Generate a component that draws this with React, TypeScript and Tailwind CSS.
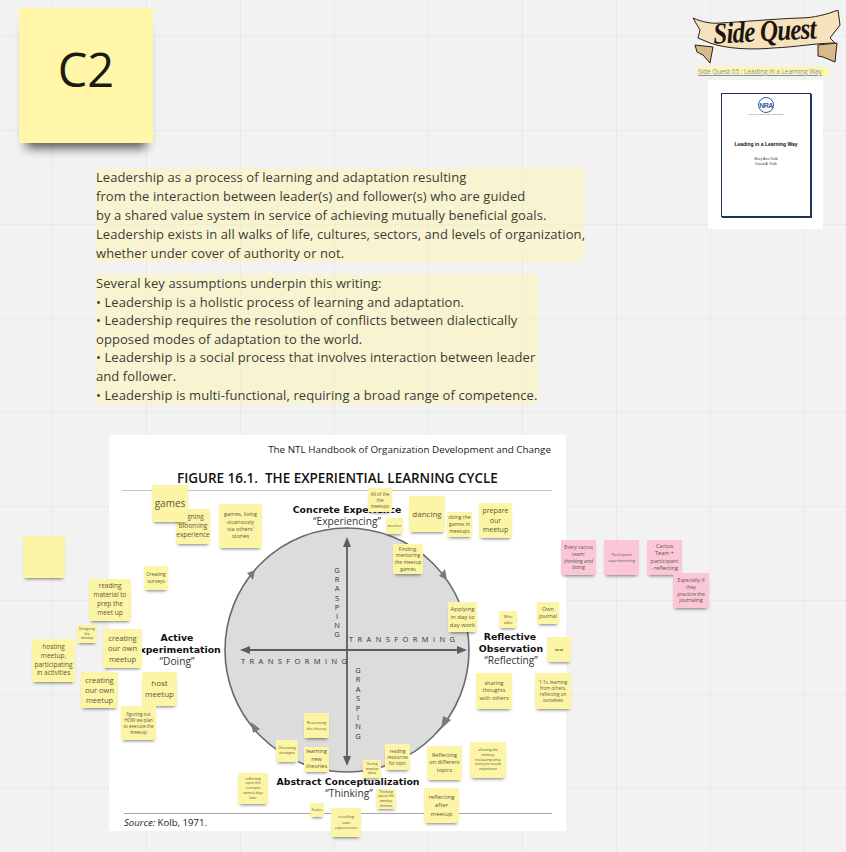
const yellowNotes = [
  { pos: "left-[176px] top-[509px] w-[34px] h-[35px]", size: "text-[6.5px]", text: "signing\nblooming\nexperience" },
  { pos: "left-[152px] top-[485px] w-[36px] h-[37px]", size: "text-[10px]", text: "games" },
  { pos: "left-[219px] top-[504px] w-[43px] h-[44px]", size: "text-[5.5px]", text: "games, living\nvicariously\nvia others'\nstories" },
  { pos: "left-[144px] top-[566px] w-[24px] h-[24px]", size: "text-[5px]", text: "Creating\nsurveys" },
  { pos: "left-[89px] top-[579px] w-[42px] h-[42px]", size: "text-[6.5px]", text: "reading\nmaterial to\nprep the\nmeet up" },
  { pos: "left-[77px] top-[625px] w-[20px] h-[18px]", size: "text-[3.5px]", text: "Designing\nthe\nmeetup" },
  { pos: "left-[103px] top-[629px] w-[39px] h-[39px]", size: "text-[7.5px]", text: "creating\nour own\nmeetup" },
  { pos: "left-[32px] top-[639px] w-[43px] h-[43px]", size: "text-[6.5px]", text: "hosting\nmeetup,\nparticipating\nin activities" },
  { pos: "left-[81px] top-[672px] w-[37px] h-[36px]", size: "text-[7.5px]", text: "creating\nour own\nmeetup" },
  { pos: "left-[142px] top-[672px] w-[35px] h-[34px]", size: "text-[8px]", text: "host\nmeetup" },
  { pos: "left-[121px] top-[706px] w-[35px] h-[34px]", size: "text-[4.5px]", text: "figuring out\nHOW we plan\nto execute the\nmeetup" },
  { pos: "left-[23px] top-[536px] w-[42px] h-[42px]", size: "text-[5px]", text: "" },
  { pos: "left-[368px] top-[488px] w-[24px] h-[24px]", size: "text-[4.5px]", text: "All of the\nthe\nmeetups" },
  { pos: "left-[386px] top-[518px] w-[17px] h-[16px]", size: "text-[4px]", text: "mentor\n" },
  { pos: "left-[409px] top-[496px] w-[36px] h-[36px]", size: "text-[8px]", text: "dancing" },
  { pos: "left-[447px] top-[512px] w-[25px] h-[25px]", size: "text-[5px]", text: "doing the\ngames in\nmeetups" },
  { pos: "left-[479px] top-[503px] w-[33px] h-[35px]", size: "text-[7px]", text: "prepare\nour\nmeetup" },
  { pos: "left-[393px] top-[544px] w-[30px] h-[30px]", size: "text-[5px]", text: "Finding,\nmentoring\nthe meetup\ngames" },
  { pos: "left-[448px] top-[602px] w-[29px] h-[30px]", size: "text-[6px]", text: "Applying\nin day to\nday work" },
  { pos: "left-[499px] top-[611px] w-[18px] h-[17px]", size: "text-[4px]", text: "Who\ntalks" },
  { pos: "left-[537px] top-[602px] w-[22px] h-[22px]", size: "text-[5.5px]", text: "Own\njournal" },
  { pos: "left-[547px] top-[637px] w-[24px] h-[25px]", size: "text-[8px]", text: "==" },
  { pos: "left-[476px] top-[673px] w-[36px] h-[36px]", size: "text-[5.5px]", text: "sharing\nthoughts\nwith others" },
  { pos: "left-[535px] top-[673px] w-[36px] h-[36px]", size: "text-[4.5px]", text: "1-1s, learning\nfrom others,\nreflecting on\nourselves" },
  { pos: "left-[304px] top-[713px] w-[25px] h-[25px]", size: "text-[4px]", text: "Reasoning\nthe theory" },
  { pos: "left-[276px] top-[740px] w-[22px] h-[22px]", size: "text-[3.5px]", text: "Discussing\nstrategies" },
  { pos: "left-[304px] top-[747px] w-[25px] h-[25px]", size: "text-[5.5px]", text: "learning\nnew\ntheories" },
  { pos: "left-[385px] top-[744px] w-[25px] h-[26px]", size: "text-[4.5px]", text: "reading\nresources\nfor topic" },
  { pos: "left-[363px] top-[760px] w-[18px] h-[18px]", size: "text-[3.5px]", text: "Having\nmeetup\nideas" },
  { pos: "left-[427px] top-[746px] w-[35px] h-[34px]", size: "text-[5.5px]", text: "Reflecting\non different\ntopics" },
  { pos: "left-[470px] top-[742px] w-[36px] h-[36px]", size: "text-[3.5px]", text: "allowing the\nmeetup,\nevaluating what\neveryone would\nexperience" },
  { pos: "left-[424px] top-[788px] w-[35px] h-[35px]", size: "text-[6px]", text: "reflecting\nafter\nmeetup" },
  { pos: "left-[238px] top-[773px] w-[30px] h-[31px]", size: "text-[3.5px]", text: "reflecting\nupon the\nconcepts\nseveral days\nlater" },
  { pos: "left-[376px] top-[789px] w-[20px] h-[20px]", size: "text-[3.5px]", text: "Thinking\nabout the\nmeetup\nthemes" },
  { pos: "left-[310px] top-[803px] w-[14px] h-[14px]", size: "text-[3px]", text: "Studies" },
  { pos: "left-[331px] top-[808px] w-[30px] h-[29px]", size: "text-[4px]", text: "recalling\nown\nexperiences" },
];

const pinkNotes = [
  { pos: "left-[561px] top-[540px] w-[35px] h-[35px]", size: "text-[5px]", text: "Every cactus\nteam:\nthinking and\ndoing" },
  { pos: "left-[604px] top-[540px] w-[35px] h-[35px]", size: "text-[4px]", text: "Participant\nexperimenting" },
  { pos: "left-[647px] top-[540px] w-[35px] h-[35px]", size: "text-[5.5px]", text: "Cactus\nTeam +\nparticipant\n- reflecting" },
  { pos: "left-[673px] top-[573px] w-[36px] h-[35px]", size: "text-[5px]", text: "Especially if\nthey\npractice the\njournaling" },
];

function Note({ pos, size, text, color }: { pos: string; size: string; text: string; color: string }) {
  return (
    <div
      className={`absolute ${pos} ${color} flex items-center justify-center text-center whitespace-pre-line leading-[1.35] text-[#5a5740] shadow-[0_3px_3px_-2px_rgba(0,0,0,0.5)]`}
    >
      <span className={size}>{text}</span>
    </div>
  );
}

function SideQuestLogo() {
  return (
    <svg className="absolute left-[692px] top-[10px]" width="150" height="58" viewBox="0 0 150 58">
      <path d="M3 35 L21 37 L18 53 L11 45 L5 42 Z" fill="#d9b98c" stroke="#2a2015" strokeWidth="1" />
      <path d="M126 35 L145 33 L143 52 L131 47 L126 46 Z" fill="#d9b98c" stroke="#2a2015" strokeWidth="1" />
      <path
        d="M1 8 C10 12 20 14 28 13 C50 12 80 9 108 8 C122 8 136 4 146 0 L148 15 L138 28 L143 33 C125 33 105 37 81 38 C60 40 35 39 18 33 L6 28 L8 20 Z"
        fill="#f6e2bd"
        stroke="#2a2015"
        strokeWidth="1"
      />
      <text
        x="0"
        y="0"
        textAnchor="middle"
        fontFamily="'Liberation Serif', serif"
        fontStyle="italic"
        fontWeight="700"
        fontSize="25"
        letterSpacing="-0.8"
        fill="#1c150e"
        transform="translate(73 31) rotate(-3) scale(1 1.2)"
      >
        Side Quest
      </text>
    </svg>
  );
}

function DocThumb() {
  return (
    <div className="absolute left-[708px] top-[80px] w-[115px] h-[149px] bg-white pl-[13px] pt-[13px]">
      <div className="w-[90px] h-[124px] border border-[#1f3556] shadow-[1px_1px_0_#1f3556] flex flex-col items-center font-['Liberation_Sans',sans-serif]">
        <div className="mt-[3px] w-[16px] h-[16px] rounded-full border border-[#2f5fa5] flex items-center justify-center text-[7px] font-bold leading-none text-[#2f5fa5] tracking-[-0.5px]">
          NRA
        </div>
        <div className="mt-[1px] text-[2.5px] leading-none text-[#5a6a85]">Nonprofit Research Association</div>
        <div className="mt-[25px] text-[5px] leading-none font-bold text-[#111]">Leading in a Learning Way</div>
        <div className="mt-[10px] text-[3.6px] leading-[5px] text-[#34466a] text-center">
          Mary Ann Kolb
          <br />
          David A. Kolb
        </div>
      </div>
    </div>
  );
}

function Figure() {
  const grasp = "GRASPING".split("");
  return (
    <svg className="absolute left-[109px] top-[435px]" width="457" height="396" viewBox="109 435 457 396">
      <rect x="109" y="435" width="457" height="396" fill="#ffffff" />
      <text x="551" y="453" textAnchor="end" fontFamily="'Open Sans', sans-serif" fontSize="9.85" fill="#222">
        The NTL Handbook of Organization Development and Change
      </text>
      <text x="177" y="483" fontFamily="'Open Sans', sans-serif" fontWeight="600" fontSize="13.45" fill="#111" xmlSpace="preserve">
        FIGURE 16.1.  THE EXPERIENTIAL LEARNING CYCLE
      </text>
      <line x1="122" y1="490.5" x2="552" y2="490.5" stroke="#c4c4c4" />
      <line x1="124" y1="813.5" x2="552" y2="813.5" stroke="#a8a8a8" />

      <circle cx="347" cy="650" r="122" fill="#dcdcdc" stroke="#6a6a6a" strokeWidth="1.6" />

      <line x1="347" y1="545" x2="347" y2="757" stroke="#5c5c5c" strokeWidth="1.8" />
      <path d="M347 537 L343 547 L351 547 Z" fill="#5c5c5c" />
      <path d="M347 766 L343 756 L351 756 Z" fill="#5c5c5c" />
      <line x1="247" y1="650" x2="460" y2="650" stroke="#5c5c5c" strokeWidth="1.8" />
      <path d="M240 650 L250 646 L250 654 Z" fill="#5c5c5c" />
      <path d="M467 650 L457 646 L457 654 Z" fill="#5c5c5c" />

      <path d="M255 570 L247 573 L253 580 Z" fill="#7a7a7a" />
      <path d="M447 580 L439 576 L445 569 Z" fill="#7a7a7a" />
      <path d="M441 729 L451 720 L443 716 Z" fill="#7a7a7a" />
      <path d="M251 722 L260 729 L253 733 Z" fill="#7a7a7a" />

      {grasp.map((ch, i) => (
        <text key={`a${i}`} x="337" y={573 + i * 9.2} textAnchor="middle" fontFamily="'Open Sans', sans-serif" fontSize="7.5" fill="#333">
          {ch}
        </text>
      ))}
      {grasp.map((ch, i) => (
        <text key={`b${i}`} x="358" y={673 + i * 9.4} textAnchor="middle" fontFamily="'Open Sans', sans-serif" fontSize="7.5" fill="#333">
          {ch}
        </text>
      ))}
      <text x="349" y="642" fontFamily="'Open Sans', sans-serif" fontSize="7.5" letterSpacing="4.4" fill="#333">
        TRANSFORMING
      </text>
      <text x="241" y="664" fontFamily="'Open Sans', sans-serif" fontSize="7.5" letterSpacing="4.4" fill="#333">
        TRANSFORMING
      </text>

      <g fontFamily="'DejaVu Sans', sans-serif" fontWeight="700" fontSize="9.35" fill="#111" textAnchor="middle">
        <text x="347" y="513">Concrete Experience</text>
        <text x="177" y="641">Active</text>
        <text x="177" y="653">Experimentation</text>
        <text x="510" y="640">Reflective</text>
        <text x="511" y="652">Observation</text>
        <text x="348" y="785">Abstract Conceptualization</text>
      </g>
      <g fontFamily="'Open Sans', sans-serif" fontSize="10.2" fill="#333" textAnchor="middle">
        <text x="347" y="525">“Experiencing”</text>
        <text x="177" y="665">“Doing”</text>
        <text x="511" y="664">“Reflecting”</text>
        <text x="349" y="797">“Thinking”</text>
      </g>
      <text x="124" y="826" fontFamily="'Open Sans', sans-serif" fontSize="9.6" fill="#222">
        <tspan fontStyle="italic">Source:</tspan> Kolb, 1971.
      </text>
    </svg>
  );
}

export default function App() {
  return (
    <div className="relative w-[846px] h-[852px] overflow-hidden bg-[#f2f2f2] bg-[linear-gradient(#e8e8e8_1px,transparent_1px),linear-gradient(90deg,#e8e8e8_1px,transparent_1px)] bg-size-[94px_94px] bg-position-[52px_36px] font-['Open_Sans',sans-serif]">
      {/* big sticky */}
      <div className="absolute left-[19px] top-[8px] w-[134px] h-[135px] bg-[#fff6a8] pb-[12px] flex items-center justify-center text-[47px] text-[#1c1a14] shadow-[0_12px_10px_-7px_rgba(0,0,0,0.65)]">
        C2
      </div>

      <p className="absolute left-[96px] top-[168px] w-[488px] h-[94px] bg-[#fff7a8]/45 text-[13px] leading-[19px] tracking-[0.08px] text-[#3c3c34] whitespace-pre">
        {"Leadership as a process of learning and adaptation resulting\nfrom the interaction between leader(s) and follower(s) who are guided\nby a shared value system in service of achieving mutually beneficial goals.\nLeadership exists in all walks of life, cultures, sectors, and levels of organization,\nwhether under cover of authority or not."}
      </p>
      <p className="absolute left-[96px] top-[274px] w-[442px] h-[130px] bg-[#fff7a8]/45 text-[13px] leading-[18.6px] tracking-[0.08px] text-[#3c3c34] whitespace-pre">
        {"Several key assumptions underpin this writing:\n• Leadership is a holistic process of learning and adaptation.\n• Leadership requires the resolution of conflicts between dialectically\nopposed modes of adaptation to the world.\n• Leadership is a social process that involves interaction between leader\nand follower.\n• Leadership is multi-functional, requiring a broad range of competence."}
      </p>

      <SideQuestLogo />
      <div className="absolute left-[697px] top-[67px] w-[132px] h-[9px] bg-[#fff6a8] pl-[1px] text-[6.4px] leading-[9px] whitespace-nowrap text-[#7f8fb8] underline">
        Side Quest 05 : Leading in a Learning Way
      </div>
      <DocThumb />

      <Figure />

      {yellowNotes.map((n, i) => (
        <Note key={i} {...n} color="bg-[#fdf5a6]" />
      ))}
      {pinkNotes.map((n, i) => (
        <Note key={i} {...n} color="bg-[#fbc6d8]" />
      ))}
    </div>
  );
}
